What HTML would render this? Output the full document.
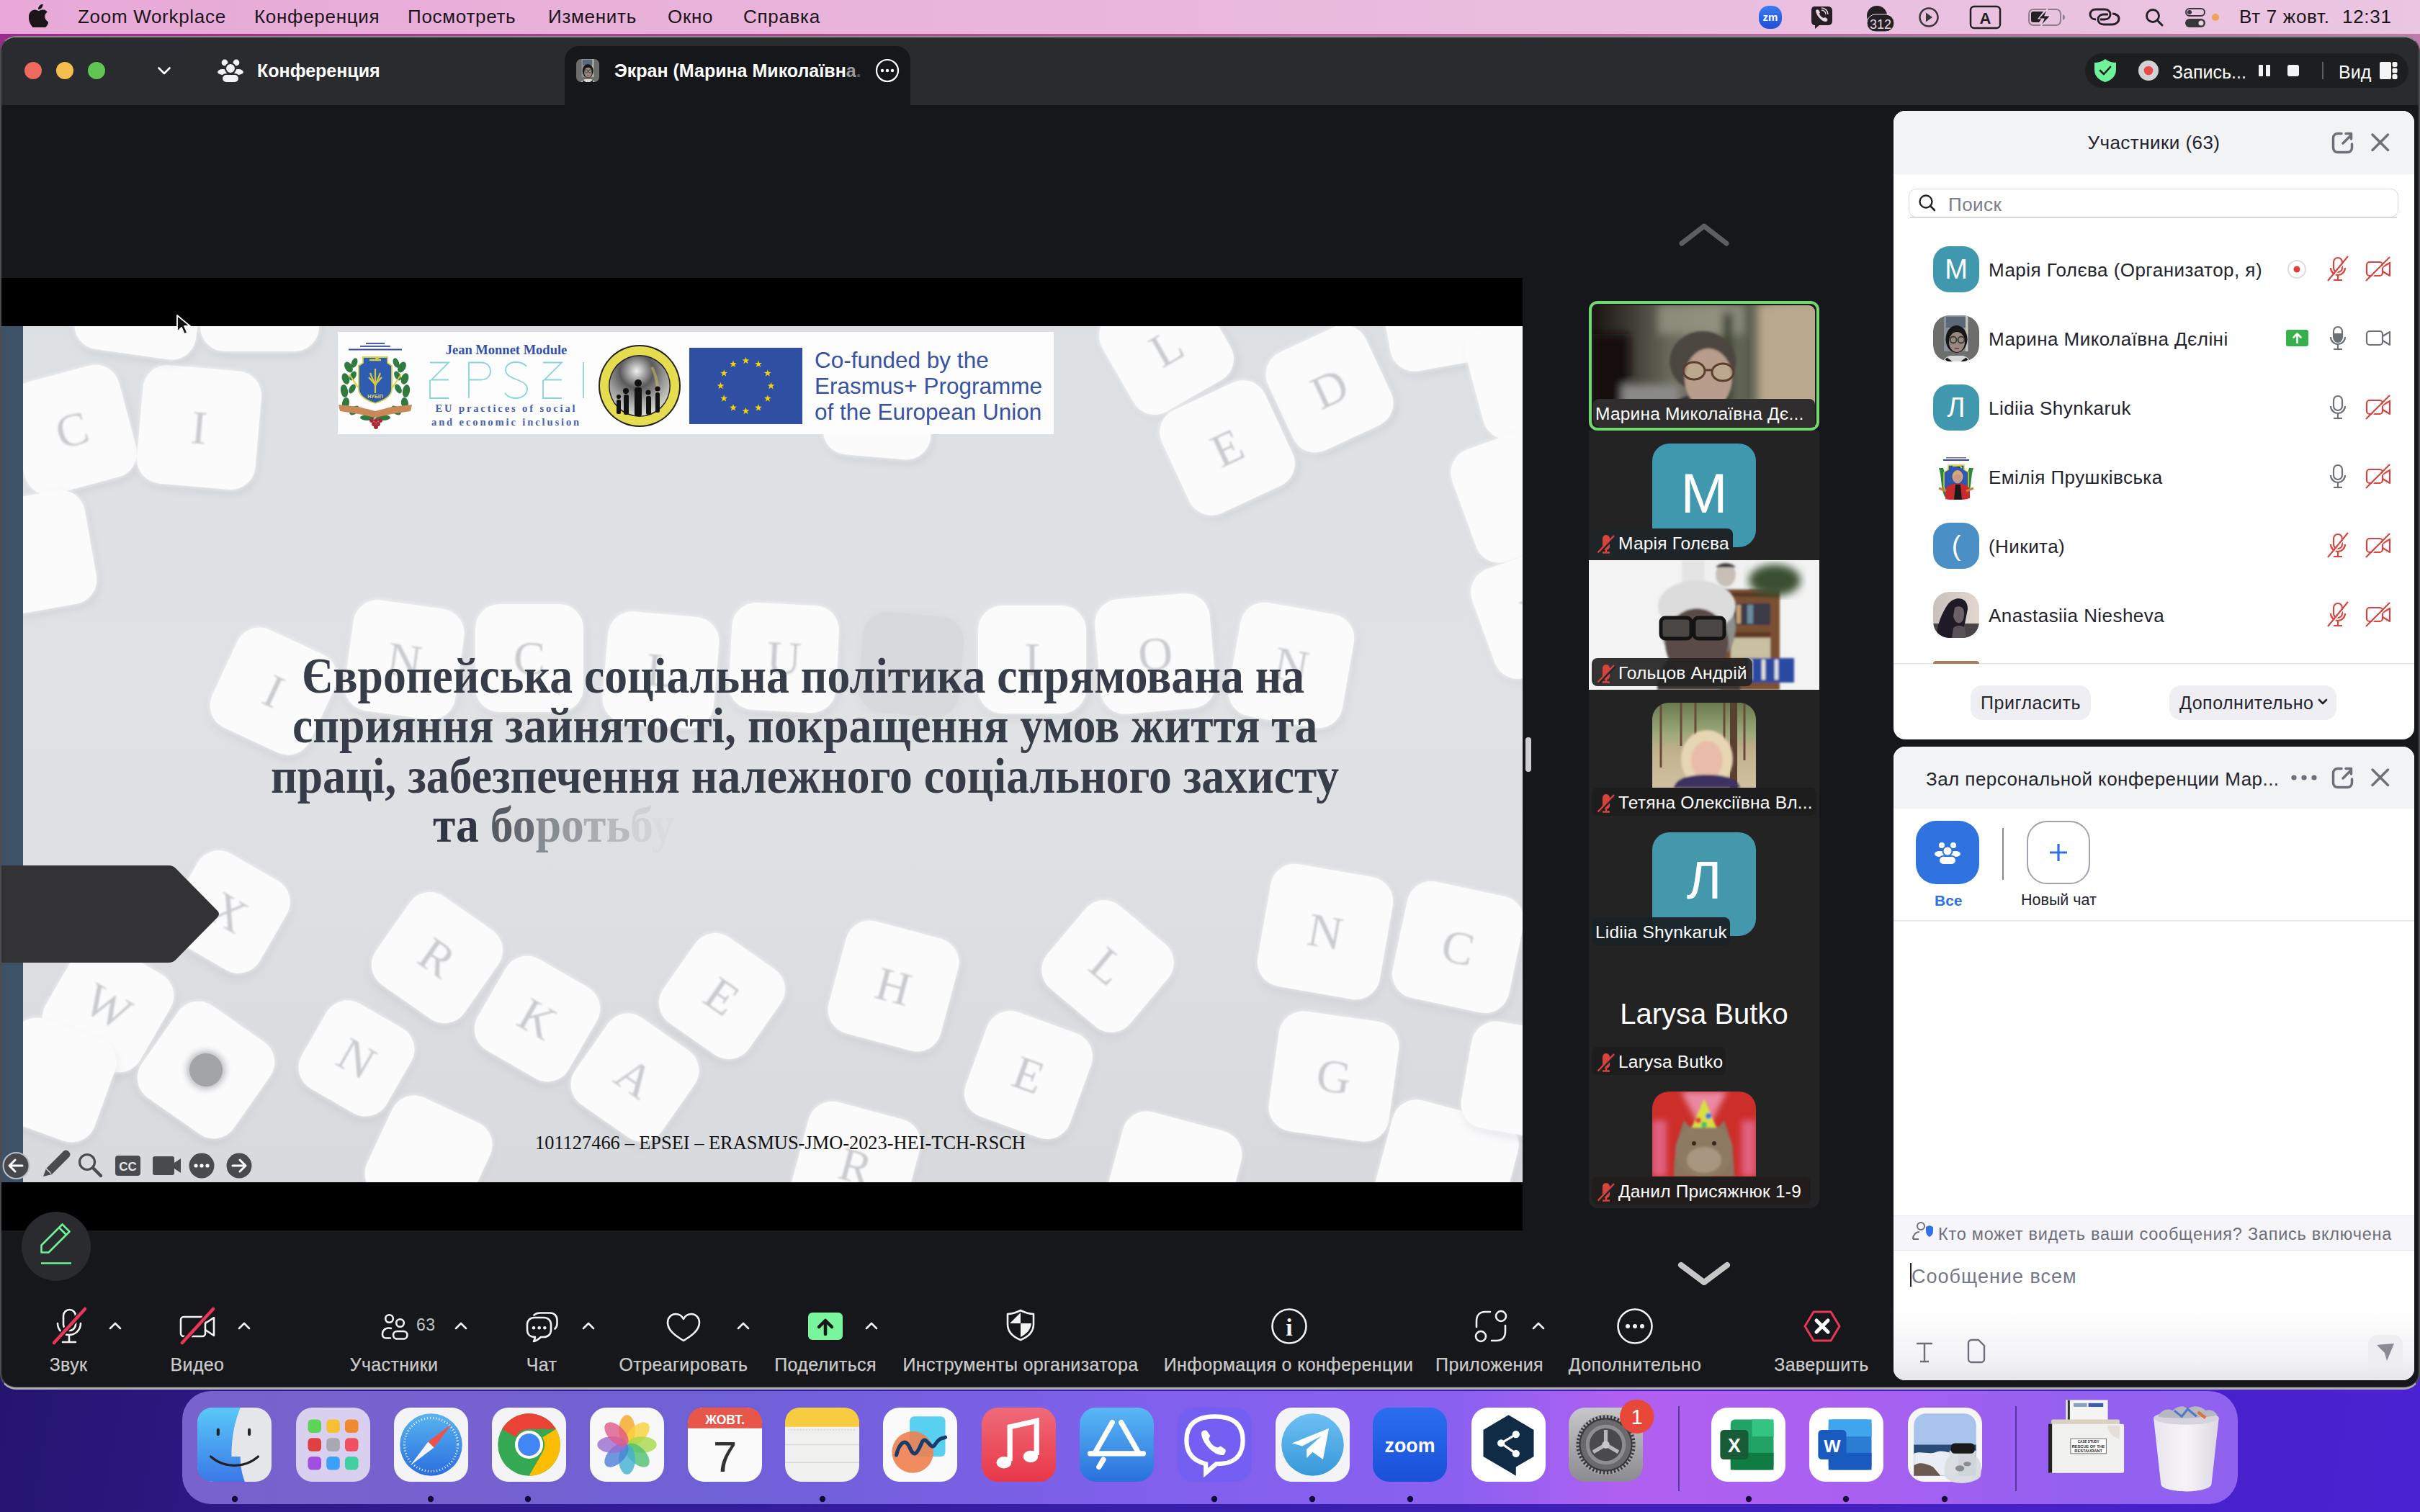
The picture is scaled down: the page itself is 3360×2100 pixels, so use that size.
<!DOCTYPE html>
<html><head><meta charset="utf-8">
<style>
*{margin:0;padding:0;box-sizing:border-box}
html,body{width:3360px;height:2100px;overflow:hidden}
body{position:relative;font-family:"Liberation Sans",sans-serif;background:linear-gradient(100deg,#1d1158 0%,#2e1a8a 20%,#3a1fb0 60%,#4b22d2 100%)}
.a{position:absolute}
.t{position:absolute;white-space:nowrap;line-height:1}
#menubar{left:0;top:0;width:3360px;height:47px;background:linear-gradient(90deg,#e8a9d8 0%,#e9b8dc 50%,#eac6e2 100%);color:#1b1519;font-size:26px;letter-spacing:0.7px}
#menubar .t{top:10px}
#strip{left:0;top:47px;width:3360px;height:40px;background:linear-gradient(90deg,#9a2a8c,#b0508f 40%,#c07aa8)}
#win{left:0;top:50px;width:3360px;height:1880px;background:#16171a;border-radius:22px;border:2px solid #4c4d50;border-top-color:#8c8c8e;border-bottom:3px solid #aeaeb0;box-shadow:inset 0 -1px 0 #3e3f42}
#tb{left:2px;top:52px;width:3356px;height:94px;background:#2a2b2e;border-radius:20px 20px 0 0}
.tl{width:24px;height:24px;border-radius:50%;top:86px}
.wb{color:#fff;font-weight:bold;font-size:25px}
.panel{background:#fff;border-radius:16px;overflow:hidden}
.lbl{color:#cacaca;font-size:25px;letter-spacing:0.35px;-webkit-text-stroke:0.25px #cacaca;top:1883px;text-align:center;width:400px;margin-left:-200px}
.caret{width:14px;height:14px;border-left:3px solid #fff;border-top:3px solid #fff;transform:rotate(45deg);top:1838px}

.die{position:absolute;background:#fbfbfc;border-radius:34px;box-shadow:0 0 5px 2px rgba(251,251,252,0.55),3px 6px 12px rgba(150,155,165,0.22)}
.die.dk{background:#d7d9dc;box-shadow:0 0 10px 3px rgba(215,217,220,0.6)}
.die b{position:absolute;left:0;right:0;top:50%;margin-top:-40px;text-align:center;font-family:"Liberation Serif",serif;font-weight:normal;font-size:66px;line-height:80px;color:#c9cbce;filter:blur(1.3px)}
.ttl{position:absolute;white-space:nowrap;font-family:"Liberation Serif",serif;font-weight:bold;font-size:69px;line-height:1;color:#373d48;transform:scaleX(0.923);transform-origin:0 0}

.lab{position:absolute;height:39px;background:rgba(28,28,28,0.88);border-radius:8px;color:#fff;font-size:24.5px;letter-spacing:0.2px;line-height:39px;white-space:nowrap;overflow:hidden}
.lab span{position:absolute;top:1px}
.av{position:absolute;width:144px;height:144px;border-radius:24px;overflow:hidden}

.pt{position:absolute;white-space:nowrap;line-height:1;color:#23232d;font-size:26px;letter-spacing:0.45px;margin-top:-2px}
.pav{position:absolute;left:2684px;width:64px;height:64px;border-radius:22px;overflow:hidden;color:#fff;font-size:38px;text-align:center;line-height:64px}
.btn{position:absolute;height:48px;background:#eeeef3;border-radius:16px;color:#23232d;font-size:25px;letter-spacing:0.5px;line-height:48px;text-align:center;white-space:nowrap}
</style></head><body>
<div id="menubar" class="a">
  <svg class="a" style="left:40px;top:6px" width="27" height="32" viewBox="0 0 170 200"><path fill="#1b1519" d="M140 106c0-26 21-38 22-39-12-17-30-20-37-20-16-2-31 9-39 9s-20-9-34-9C34 48 17 58 8 75c-19 33-5 82 13 109 9 13 20 28 34 27 14-1 19-9 36-9s21 9 35 9c15 0 24-13 33-26 10-15 14-30 15-31-1 0-33-13-34-48zM113 29c7-9 12-21 11-33-10 0-23 7-31 16-7 8-13 20-11 32 12 1 23-6 31-15z"/></svg>
  <span class="t" style="left:108px">Zoom Workplace</span>
  <span class="t" style="left:353px">Конференция</span>
  <span class="t" style="left:566px">Посмотреть</span>
  <span class="t" style="left:761px">Изменить</span>
  <span class="t" style="left:927px">Окно</span>
  <span class="t" style="left:1032px">Справка</span>
  <span class="t" style="left:3109px">Вт 7 жовт.</span>
  <span class="t" style="left:3252px">12:31</span>
</div>
<div id="strip" class="a"></div>
<div id="win" class="a"></div>
<div id="tb" class="a"></div>
<!-- traffic lights -->
<div class="a tl" style="left:34px;background:#ee6a5f"></div>
<div class="a tl" style="left:78px;background:#f5bf4f"></div>
<div class="a tl" style="left:122px;background:#61c554"></div>
<!-- tab -->
<div class="a" style="left:784px;top:64px;width:480px;height:82px;background:#16171a;border-radius:20px 20px 0 0"></div>
<span class="t wb" style="left:357px;top:86px">Конференция</span>
<span class="t wb" style="left:853px;top:86px">Экран (Марина Миколаївн<span style="color:#9a9a9c">а</span><span style="color:#555">.</span></span>
<!-- right pill -->
<div class="a" style="left:2895px;top:74px;width:449px;height:48px;background:#1d1e20;border-radius:24px"></div>
<span class="t" style="left:3016px;top:88px;color:#fff;font-size:25px">Запись...</span>
<span class="t" style="left:3247px;top:88px;color:#fff;font-size:25px">Вид</span>


<!-- menubar status icons -->
<svg class="a" style="left:2440px;top:6px" width="650" height="40" viewBox="2440 6 650 40">
  <defs><linearGradient id="zmg" x1="0" y1="0" x2="0" y2="1"><stop offset="0" stop-color="#3a7cf2"/><stop offset="1" stop-color="#1d4fd6"/></linearGradient></defs>
  <rect x="2442" y="8" width="32" height="32" rx="14" fill="url(#zmg)"/>
  <text x="2458" y="29" font-family="Liberation Sans" font-weight="bold" font-size="15" fill="#fff" text-anchor="middle">zm</text>
  <path d="M2519 9h19c4 0 6 2 6 6v14c0 4-2 6-6 6h-12l-6 5v-5c-3 0-5-2-5-6V15c0-4 2-6 4-6z" fill="#231f22"/>
  <path d="M2521 15c1-2 3-2 4-1l2 3-1 2c1 3 3 5 6 6l2-1 3 2c1 1 0 3-1 4-6 1-14-8-15-15z" fill="#ead3e6"/>
  <path d="M2529 14a6 6 0 0 1 6 6M2529 11a9 9 0 0 1 9 9" stroke="#ead3e6" stroke-width="1.5" fill="none"/>
  <circle cx="2606" cy="22" r="14" fill="#231f22"/>
  <rect x="2592" y="20" width="38" height="24" rx="12" fill="#231f22" stroke="#ead3e6" stroke-width="1"/>
  <text x="2611" y="40" font-family="Liberation Sans" font-size="18" fill="#ead3e6" text-anchor="middle">312</text>
  <circle cx="2678" cy="24" r="12.5" stroke="#3a3538" stroke-width="2.5" fill="none"/>
  <path d="M2674 17.5l9 6.5-9 6.5z" fill="#3a3538"/>
  <rect x="2736" y="9" width="41" height="30" rx="5" stroke="#231f22" stroke-width="2.5" fill="none"/>
  <text x="2756.5" y="33" font-family="Liberation Sans" font-weight="bold" font-size="22" fill="#231f22" text-anchor="middle">A</text>
  <rect x="2817" y="13" width="44" height="22" rx="6" stroke="#8e7e8c" stroke-width="2" fill="none"/>
  <path d="M2864 20v8c2-1 3-2 3-4s-1-3-3-4z" fill="#8e7e8c"/>
  <path d="M2823 16h14l-6 8h5l-5 7h-8c-2 0-3-1-3-3v-9c0-2 1-3 3-3z" fill="#231f22"/>
  <path d="M2843 12l-13 14h8l-5 11 14-15h-8z" fill="#231f22" stroke="#ead3e6" stroke-width="1.2" stroke-linejoin="round"/>
  <path d="M2910 27c-5 0-8-3-8-7s3-7 8-7h12c5 0 8 3 8 7s-3 7-8 7h-6" stroke="#231f22" stroke-width="3" fill="none"/>
  <path d="M2933 19c5 0 9 3 9 7s-4 8-9 8h-12c-5 0-8-3-8-7s3-7 8-7h6" stroke="#231f22" stroke-width="3" fill="none"/>
  <circle cx="2989" cy="22" r="8.5" stroke="#231f22" stroke-width="2.8" fill="none"/>
  <path d="M2995 28l7 7" stroke="#231f22" stroke-width="3" stroke-linecap="round"/>
  <rect x="3035" y="12" width="26" height="10" rx="5" stroke="#3a3538" stroke-width="2" fill="none"/>
  <circle cx="3040" cy="17" r="3" fill="#3a3538"/>
  <rect x="3034" y="26" width="28" height="12" rx="6" fill="#3a3538"/>
  <circle cx="3056" cy="32" r="3.5" fill="#ead3e6"/>
  <circle cx="3076" cy="24" r="5" fill="#f0a356"/>
</svg>
<!-- toolbar icons -->
<svg class="a" style="left:0;top:50px" width="1300" height="96" viewBox="0 50 1300 96">
  <path d="M220.5 94.5l7.5 7.5 7.5-7.5" stroke="#fff" stroke-width="2.6" fill="none" stroke-linecap="round" stroke-linejoin="round"/>
  <g fill="#f3f3f5" stroke="#2a2b2e" stroke-width="2.2">
    <circle cx="312" cy="87" r="5.5"/><circle cx="328" cy="87" r="5.5"/>
    <ellipse cx="309" cy="100" rx="8" ry="5"/><ellipse cx="331" cy="100" rx="8" ry="5"/>
    <circle cx="320" cy="95" r="7"/>
    <rect x="308" y="103" width="24" height="12" rx="6"/>
  </g>
  <g transform="translate(800 82) scale(0.5)"><defs><clipPath id="cpw2"><rect width="64" height="64" rx="14"/></clipPath></defs><g clip-path="url(#cpw2)"><rect width="64" height="64" fill="#6d6d6b"/><rect x="15" y="0" width="34" height="50" fill="#8a9098"/><rect x="18" y="2" width="28" height="15" fill="#5a6878"/><rect x="45" y="0" width="3" height="50" fill="#c8c8b8"/><ellipse cx="32.5" cy="33" rx="15" ry="19" fill="#161616"/><ellipse cx="33" cy="37" rx="11" ry="14" fill="#9a8880"/><path d="M20 30c2-9 7-13 13-13s11 4 13 11c-4-4-8-5-13-5s-10 1-13 7z" fill="#161616"/><circle cx="28" cy="34" r="4.5" fill="none" stroke="#333a38" stroke-width="1.8"/><circle cx="39" cy="34" r="4.5" fill="none" stroke="#333a38" stroke-width="1.8"/><path d="M30 46h6" stroke="#7a4a50" stroke-width="2"/><path d="M14 64c2-6 8-8 12-8h13c5 0 10 2 12 8z" fill="#d8d8d6"/><path d="M18 60l8 6M47 60l-8 6" stroke="#161616" stroke-width="4"/></g></g>
  <circle cx="1232" cy="98" r="15" stroke="#fff" stroke-width="2.2" fill="none"/>
  <circle cx="1225" cy="98" r="2.2" fill="#fff"/><circle cx="1232" cy="98" r="2.2" fill="#fff"/><circle cx="1239" cy="98" r="2.2" fill="#fff"/>
</svg>
<svg class="a" style="left:2895px;top:74px" width="449" height="48" viewBox="2895 74 449 48">
  <path d="M2923 82c5 4 10 5 15 5v10c0 9-7 15-15 17-8-2-15-8-15-17V87c5 0 10-1 15-5z" fill="#6ff29a"/>
  <path d="M2916 98l5 5 9-10" stroke="#1d1e20" stroke-width="2.6" fill="none" stroke-linecap="round" stroke-linejoin="round"/>
  <circle cx="2983" cy="98" r="14" fill="#d2d2d4"/><circle cx="2983" cy="98" r="6.3" fill="#e94b4b"/>
  <rect x="3136" y="90" width="6" height="16" rx="1" fill="#f4f4f4"/><rect x="3146" y="90" width="6" height="16" rx="1" fill="#f4f4f4"/>
  <rect x="3176" y="90" width="16" height="16" rx="3" fill="#f4f4f4"/>
  <rect x="3224" y="86" width="2" height="24" fill="#5d5e61"/>
  <rect x="3304" y="86" width="16" height="24" rx="2" fill="#f4f4f4"/>
  <rect x="3321.5" y="86" width="7" height="7" rx="2" fill="#f4f4f4"/>
  <rect x="3321.5" y="94.5" width="7" height="7" rx="2" fill="#f4f4f4"/>
  <rect x="3321.5" y="103" width="7" height="7" rx="2" fill="#f4f4f4"/>
</svg>

<!-- main black -->
<div class="a" style="left:2px;top:386px;width:2112px;height:1323px;background:#000"></div>
<div id="slide" class="a" style="left:2px;top:453px;width:2112px;height:1189px;background:linear-gradient(180deg,#dde0e3 0%,#e0e2e5 45%,#dcdee1 70%,#d8dadd 100%);overflow:hidden">
<div class="die" style="left:18px;top:64px;width:160px;height:160px;transform:rotate(-15deg)"><b>C</b></div>
<div class="die" style="left:192px;top:58px;width:165px;height:165px;transform:rotate(5deg)"><b>I</b></div>
<div class="die" style="left:-35px;top:235px;width:160px;height:160px;transform:rotate(-10deg)"></div>
<div class="die" style="left:108px;top:-130px;width:170px;height:170px;transform:rotate(8deg)"></div>
<div class="die" style="left:276px;top:-130px;width:165px;height:165px;transform:rotate(0deg)"></div>
<div class="die" style="left:1540px;top:-48px;width:155px;height:155px;transform:rotate(-30deg)"><b>L</b></div>
<div class="die" style="left:1769px;top:12px;width:150px;height:150px;transform:rotate(-25deg)"><b>D</b></div>
<div class="die" style="left:1623px;top:90px;width:158px;height:158px;transform:rotate(-25deg)"><b>E</b></div>
<div class="die" style="left:1921px;top:-83px;width:140px;height:140px;transform:rotate(-10deg)"></div>
<div class="die" style="left:2043px;top:-13px;width:160px;height:160px;transform:rotate(-15deg)"></div>
<div class="die" style="left:1144px;top:32px;width:150px;height:150px;transform:rotate(5deg)"></div>
<div class="die" style="left:2026px;top:150px;width:165px;height:165px;transform:rotate(-20deg)"></div>
<div class="die" style="left:2053px;top:317px;width:160px;height:160px;transform:rotate(-20deg)"><b>X</b></div>
<div class="die" style="left:303px;top:432px;width:150px;height:150px;transform:rotate(25deg)"><b>I</b></div>
<div class="die" style="left:482px;top:386px;width:155px;height:155px;transform:rotate(8deg)"><b>N</b></div>
<div class="die" style="left:658px;top:386px;width:150px;height:150px;transform:rotate(0deg)"><b>C</b></div>
<div class="die" style="left:838px;top:400px;width:155px;height:155px;transform:rotate(5deg)"><b>L</b></div>
<div class="die" style="left:1012px;top:386px;width:149px;height:149px;transform:rotate(3deg)"><b>U</b></div>
<div class="die dk" style="left:1193px;top:400px;width:140px;height:140px;transform:rotate(5deg)"></div>
<div class="die" style="left:1356px;top:388px;width:150px;height:150px;transform:rotate(0deg)"><b>I</b></div>
<div class="die" style="left:1522px;top:375px;width:160px;height:160px;transform:rotate(-5deg)"><b>O</b></div>
<div class="die" style="left:1711px;top:391px;width:160px;height:160px;transform:rotate(10deg)"><b>N</b></div>
<div class="die" style="left:244px;top:742px;width:143px;height:143px;transform:rotate(30deg)"><b>X</b></div>
<div class="die" style="left:72px;top:869px;width:152px;height:152px;transform:rotate(30deg)"><b>W</b></div>
<div class="die" style="left:-2px;top:972px;width:150px;height:150px;transform:rotate(20deg)"></div>
<div class="die" style="left:206px;top:955px;width:156px;height:156px;transform:rotate(35deg)"><i style="position:absolute;left:50%;top:50%;width:46px;height:46px;margin:-23px 0 0 -23px;border-radius:50%;background:#a3a4a7;box-shadow:0 0 9px 4px #bebfc2"></i></div>
<div class="die" style="left:530px;top:802px;width:150px;height:150px;transform:rotate(35deg)"><b>R</b></div>
<div class="die" style="left:671px;top:889px;width:146px;height:146px;transform:rotate(30deg)"><b>K</b></div>
<div class="die" style="left:425px;top:949px;width:136px;height:136px;transform:rotate(30deg)"><b>N</b></div>
<div class="die" style="left:806px;top:970px;width:147px;height:147px;transform:rotate(35deg)"><b>A</b></div>
<div class="die" style="left:928px;top:858px;width:145px;height:145px;transform:rotate(35deg)"><b>E</b></div>
<div class="die" style="left:1158px;top:836px;width:161px;height:161px;transform:rotate(15deg)"><b>H</b></div>
<div class="die" style="left:1461px;top:814px;width:150px;height:150px;transform:rotate(40deg)"><b>L</b></div>
<div class="die" style="left:1752px;top:755px;width:172px;height:172px;transform:rotate(10deg)"><b>N</b></div>
<div class="die" style="left:1940px;top:780px;width:165px;height:165px;transform:rotate(12deg)"><b>C</b></div>
<div class="die" style="left:1349px;top:963px;width:154px;height:154px;transform:rotate(20deg)"><b>E</b></div>
<div class="die" style="left:1766px;top:958px;width:168px;height:168px;transform:rotate(8deg)"><b>G</b></div>
<div class="die" style="left:518px;top:1082px;width:150px;height:150px;transform:rotate(25deg)"></div>
<div class="die" style="left:1106px;top:1087px;width:160px;height:160px;transform:rotate(15deg)"><b>R</b></div>
<div class="die" style="left:1541px;top:1102px;width:170px;height:170px;transform:rotate(15deg)"></div>
<div class="die" style="left:1914px;top:1087px;width:180px;height:180px;transform:rotate(15deg)"></div>
<div class="die" style="left:2033px;top:972px;width:150px;height:150px;transform:rotate(10deg)"></div>
<div class="a" style="left:0;top:0;width:30px;height:1189px;background:#3d5266"></div>
<span class="ttl" style="left:417px;top:452px">Європейська соціальна політика спрямована на</span>
<span class="ttl" style="left:404px;top:521px">сприяння зайнятості, покращення умов життя та</span>
<span class="ttl" style="left:374px;top:591px">праці, забезпечення належного соціального захисту</span>
<span class="ttl" style="left:599px;top:659px;color:#2f3542">та <span style="color:#565c64">б</span><span style="color:#666b73">о</span><span style="color:#878b92">р</span><span style="color:#979ba1">о</span><span style="color:#a9adb2">т</span><span style="color:#b7bbbf">ь</span><span style="color:#ced1d5">б</span><span style="color:#d9dbdf">у</span></span>
<span class="t" style="left:741px;top:1121px;font-family:'Liberation Serif',serif;font-size:26.4px;color:#111">101127466 – EPSEI – ERASMUS-JMO-2023-HEI-TCH-RSCH</span>
<svg class="a" style="left:0;top:749px" width="310" height="136" viewBox="0 0 310 136"><path d="M0 0H232q6 0 10 4L300 63q4 4 0 9L242 131q-4 4-10 4H0z" fill="#333335"/></svg>
</div>


<svg class="a" style="left:469px;top:461px" width="994" height="143" viewBox="469 461 994 143">
  <rect x="469" y="461" width="994" height="142" fill="#fdfdfd"/>
  <!-- emblem -->
  <g fill="#3a4a9a"><rect x="508" y="476" width="26" height="1.8"/><rect x="500" y="480" width="42" height="1.8"/><rect x="484" y="484.5" width="74" height="2"/></g>
  <g fill="#2f7a3e">
   <ellipse cx="484" cy="510" rx="5" ry="8" transform="rotate(-30 484 510)"/><ellipse cx="492" cy="504" rx="4" ry="7" transform="rotate(20 492 504)"/>
   <ellipse cx="480" cy="526" rx="5" ry="8" transform="rotate(-20 480 526)"/><ellipse cx="490" cy="522" rx="4" ry="7" transform="rotate(30 490 522)"/>
   <ellipse cx="478" cy="543" rx="5" ry="9" transform="rotate(-10 478 543)"/><ellipse cx="489" cy="540" rx="4" ry="7" transform="rotate(30 489 540)"/>
   <ellipse cx="480" cy="560" rx="5" ry="8" transform="rotate(10 480 560)"/><ellipse cx="492" cy="570" rx="5" ry="8" transform="rotate(50 492 570)"/>
   <ellipse cx="558" cy="510" rx="5" ry="8" transform="rotate(30 558 510)"/><ellipse cx="550" cy="504" rx="4" ry="7" transform="rotate(-20 550 504)"/>
   <ellipse cx="562" cy="526" rx="5" ry="8" transform="rotate(20 562 526)"/><ellipse cx="552" cy="522" rx="4" ry="7" transform="rotate(-30 552 522)"/>
   <ellipse cx="564" cy="543" rx="5" ry="9" transform="rotate(10 564 543)"/><ellipse cx="553" cy="540" rx="4" ry="7" transform="rotate(-30 553 540)"/>
   <ellipse cx="562" cy="560" rx="5" ry="8" transform="rotate(-10 562 560)"/><ellipse cx="550" cy="570" rx="5" ry="8" transform="rotate(-50 550 570)"/>
   <ellipse cx="510" cy="580" rx="10" ry="4"/><ellipse cx="532" cy="580" rx="10" ry="4"/>
  </g>
  <path d="M485 520l12 18M557 520l-12 18" stroke="#e0d040" stroke-width="2"/>
  <path d="M504 496h34v8l6 4v32c0 10-10 16-23 20-13-4-23-10-23-20v-32l6-4z" fill="#2e5cb0" stroke="#cfd040" stroke-width="1.8"/>
  <path d="M513 500h16M521 499l6-3" stroke="#d8d040" stroke-width="2.4"/>
  <path d="M514 518l7 18 7-18M521 512v34M512 524l9 10 9-10" stroke="#d8c840" stroke-width="2.2" fill="none"/>
  <text x="521" y="553" font-family="Liberation Sans" font-weight="bold" font-size="7" fill="#e8d850" text-anchor="middle">НУБіП</text>
  <path d="M470 562l28 3 23 6 23-6 28-3-2 9-26 4-23 5-23-5-26-4z" fill="#c98858"/>
  <g fill="#a82838"><circle cx="516" cy="584" r="3"/><circle cx="522" cy="584" r="3"/><circle cx="528" cy="584" r="3"/><circle cx="519" cy="589" r="3"/><circle cx="525" cy="589" r="3"/><circle cx="522" cy="593" r="3"/></g>
  <!-- Jean Monnet -->
  <text x="703" y="492" font-family="Liberation Serif" font-weight="bold" font-size="18.5" fill="#3450a6" text-anchor="middle">Jean Monnet Module</text>
  <g stroke="#86d6db" stroke-width="1.8" fill="none">
    <path d="M597 503.5h26L599 527.5h24M597 527.5v25.5h26"/>
    <path d="M651 553V503.5h17c9 0 13 6 13 12s-4 12-13 12h-17"/>
    <path d="M731 509c-3-4-8-6-15-6-9 0-14 5-14 11 0 14 30 12 30 26 0 8-7 13-16 13-7 0-12-3-15-7"/>
    <path d="M754 503.5h26L756 527.5h24M754 527.5v25.5h26"/>
    <path d="M810 503v50"/>
  </g>
  <text x="703" y="572" font-family="Liberation Serif" font-weight="bold" font-size="14.5" letter-spacing="2.9" fill="#4561ad" text-anchor="middle">EU practices of social</text>
  <text x="703" y="591" font-family="Liberation Serif" font-weight="bold" font-size="14.5" letter-spacing="2.9" fill="#4561ad" text-anchor="middle">and economic inclusion</text>
  <!-- round logo -->
  <defs><radialGradient id="glob" cx="0.45" cy="0.25" r="0.8"><stop offset="0" stop-color="#f0f0f0"/><stop offset="0.35" stop-color="#5a5a5a"/><stop offset="0.6" stop-color="#9a9a9a"/><stop offset="1" stop-color="#e8e8e0"/></radialGradient></defs>
  <circle cx="888" cy="536" r="57" fill="#222"/>
  <circle cx="888" cy="536" r="55" fill="#e6dc50"/>
  <circle cx="888" cy="536" r="43" fill="#222"/>
  <circle cx="888" cy="536" r="41.5" fill="url(#glob)"/>
  <path d="M905 510c6 10 10 30 8 50" stroke="#c8b860" stroke-width="4" fill="none" opacity="0.6"/>
  <g fill="#111"><rect x="866" y="548" width="7" height="28" rx="2.5"/><rect x="881" y="538" width="10" height="40" rx="3"/><rect x="897" y="550" width="7" height="26" rx="2.5"/><rect x="910" y="545" width="6" height="28" rx="2.5"/><rect x="856" y="555" width="6" height="20" rx="2"/><circle cx="869" cy="543" r="4"/><circle cx="886" cy="532" r="5"/><circle cx="900" cy="545" r="3.6"/><circle cx="913" cy="540" r="3.6"/><circle cx="859" cy="551" r="3"/></g>
  <!-- EU flag -->
  <rect x="957" y="483" width="157" height="106" fill="#2f50a2"/>
  <polygon points="1035.5,495.8 1036.7,499.3 1040.4,499.4 1037.5,501.6 1038.6,505.2 1035.5,503.1 1032.4,505.2 1033.5,501.6 1030.6,499.4 1034.3,499.3" fill="#f5d20a"/><polygon points="1053.0,500.5 1054.2,504.0 1057.9,504.1 1055.0,506.3 1056.1,509.9 1053.0,507.8 1049.9,509.9 1051.0,506.3 1048.1,504.1 1051.8,504.0" fill="#f5d20a"/><polygon points="1065.8,513.3 1067.0,516.8 1070.8,516.9 1067.8,519.1 1068.9,522.7 1065.8,520.6 1062.8,522.7 1063.8,519.1 1060.9,516.9 1064.6,516.8" fill="#f5d20a"/><polygon points="1070.5,530.8 1071.7,534.3 1075.4,534.4 1072.5,536.6 1073.6,540.2 1070.5,538.1 1067.4,540.2 1068.5,536.6 1065.6,534.4 1069.3,534.3" fill="#f5d20a"/><polygon points="1065.8,548.3 1067.0,551.8 1070.8,551.9 1067.8,554.1 1068.9,557.7 1065.8,555.6 1062.8,557.7 1063.8,554.1 1060.9,551.9 1064.6,551.8" fill="#f5d20a"/><polygon points="1053.0,561.1 1054.2,564.6 1057.9,564.7 1055.0,567.0 1056.1,570.5 1053.0,568.4 1049.9,570.5 1051.0,567.0 1048.1,564.7 1051.8,564.6" fill="#f5d20a"/><polygon points="1035.5,565.8 1036.7,569.3 1040.4,569.4 1037.5,571.6 1038.6,575.2 1035.5,573.1 1032.4,575.2 1033.5,571.6 1030.6,569.4 1034.3,569.3" fill="#f5d20a"/><polygon points="1018.0,561.1 1019.2,564.6 1022.9,564.7 1020.0,567.0 1021.1,570.5 1018.0,568.4 1014.9,570.5 1016.0,567.0 1013.1,564.7 1016.8,564.6" fill="#f5d20a"/><polygon points="1005.2,548.3 1006.4,551.8 1010.1,551.9 1007.2,554.1 1008.2,557.7 1005.2,555.6 1002.1,557.7 1003.2,554.1 1000.2,551.9 1004.0,551.8" fill="#f5d20a"/><polygon points="1000.5,530.8 1001.7,534.3 1005.4,534.4 1002.5,536.6 1003.6,540.2 1000.5,538.1 997.4,540.2 998.5,536.6 995.6,534.4 999.3,534.3" fill="#f5d20a"/><polygon points="1005.2,513.3 1006.4,516.8 1010.1,516.9 1007.2,519.1 1008.2,522.7 1005.2,520.6 1002.1,522.7 1003.2,519.1 1000.2,516.9 1004.0,516.8" fill="#f5d20a"/><polygon points="1018.0,500.5 1019.2,504.0 1022.9,504.1 1020.0,506.3 1021.1,509.9 1018.0,507.8 1014.9,509.9 1016.0,506.3 1013.1,504.1 1016.8,504.0" fill="#f5d20a"/>
  <text font-family="Liberation Sans" font-size="31.5" fill="#3852a2"><tspan x="1131" y="511">Co-funded by the</tspan><tspan x="1131" y="547">Erasmus+ Programme</tspan><tspan x="1131" y="583">of the European Union</tspan></text>
</svg>



<!-- slide toolbar -->
<svg class="a" style="left:0;top:1590px" width="360" height="55" viewBox="0 1590 360 55">
  <circle cx="22.5" cy="1619" r="18" fill="#47484b" stroke="#b8c0c8" stroke-width="2"/>
  <path d="M31 1619H14M21 1611l-8 8 8 8" stroke="#fff" stroke-width="3" fill="none" stroke-linecap="round" stroke-linejoin="round"/>
  <path d="M60 1634l4-11 24-24c2-2 5-2 7 0l1 1c2 2 2 5 0 7l-24 24z" fill="#4a4b4e"/>
  <path d="M64 1623l7 7" stroke="#dcdee1" stroke-width="1.5"/>
  <circle cx="121" cy="1614" r="10.5" fill="none" stroke="#4a4b4e" stroke-width="3.2"/>
  <path d="M129 1622l11 11" stroke="#4a4b4e" stroke-width="4.5" stroke-linecap="round"/>
  <rect x="160" y="1605" width="35" height="28" rx="4" fill="#4a4b4e"/>
  <text x="177.5" y="1626" font-family="Liberation Sans" font-weight="bold" font-size="17" fill="#e8e8e8" text-anchor="middle">CC</text>
  <rect x="212" y="1606" width="30" height="26" rx="3" fill="#4a4b4e"/>
  <path d="M242 1615l9-6v20l-9-6z" fill="#4a4b4e"/>
  <circle cx="280" cy="1619" r="17.5" fill="#4a4b4e"/>
  <circle cx="272" cy="1619" r="2.6" fill="#fff"/><circle cx="280" cy="1619" r="2.6" fill="#fff"/><circle cx="288" cy="1619" r="2.6" fill="#fff"/>
  <circle cx="332" cy="1619" r="17.5" fill="#4a4b4e"/>
  <path d="M323 1619H341M333 1611l8 8-8 8" stroke="#fff" stroke-width="3" fill="none" stroke-linecap="round" stroke-linejoin="round"/>
</svg>
<!-- cursor -->
<svg class="a" style="left:243px;top:436px" width="22" height="32" viewBox="0 0 22 32"><path d="M3 2v23l6-6 4 9 4-2-4-9h8z" fill="#111" stroke="#fff" stroke-width="1.8" stroke-linejoin="round"/></svg>
<!-- gallery handle -->
<div class="a" style="left:2118px;top:1024px;width:8px;height:48px;border-radius:4px;background:#cfcfcf"></div>

<!-- gallery column -->
<div class="a" style="left:2206px;top:598px;width:320px;height:1080px;background:#232323;border-radius:0 0 12px 12px"></div>
<!-- tile1 -->
<div class="a" style="left:2206px;top:418px;width:320px;height:180px;border:4px solid #72d76e;border-radius:12px;background:#1a1a1a"></div>
<svg class="a" style="left:2212px;top:424px" width="308" height="168" viewBox="0 0 308 168">
 <defs><clipPath id="t1c"><rect width="308" height="168" rx="9"/></clipPath><filter id="b6"><feGaussianBlur stdDeviation="6"/></filter><filter id="b2"><feGaussianBlur stdDeviation="1.6"/></filter>
 <linearGradient id="t1g" x1="0" y1="0" x2="1" y2="0"><stop offset="0" stop-color="#1a1510"/><stop offset="0.15" stop-color="#3a3630"/><stop offset="0.35" stop-color="#6a6a5c"/><stop offset="0.55" stop-color="#7a7a6a"/><stop offset="0.7" stop-color="#5a5e50"/><stop offset="0.82" stop-color="#a89a80"/><stop offset="1" stop-color="#b8a88e"/></linearGradient></defs>
 <g clip-path="url(#t1c)">
  <rect width="308" height="168" fill="url(#t1g)"/>
  <g filter="url(#b6)">
   <rect x="90" y="0" width="120" height="40" fill="#9a9a88" opacity="0.7"/>
   <rect x="180" y="10" width="14" height="158" fill="#3a4232"/>
   <rect x="0" y="40" width="50" height="128" fill="#15100c"/>
   <rect x="40" y="110" width="80" height="58" fill="#8a8a88"/>
   <rect x="230" y="0" width="78" height="168" fill="#b8a88c"/>
  </g>
  <g filter="url(#b2)">
   <path d="M100 168c2-30 20-45 50-45s48 15 50 45z" fill="#3a3a40"/>
   <ellipse cx="152" cy="78" rx="46" ry="42" fill="#4c4640"/>
   <ellipse cx="160" cy="102" rx="33" ry="42" fill="#b89c8c"/>
   <path d="M118 72c6-22 22-32 40-30 18 2 32 12 36 34-8-12-22-18-38-18-16 0-30 6-38 14z" fill="#4c4640"/>
  </g>
  <ellipse cx="140" cy="91" rx="15" ry="12" fill="rgba(200,200,150,0.25)" stroke="#5a3e30" stroke-width="3"/>
  <ellipse cx="180" cy="93" rx="15" ry="12" fill="rgba(200,200,150,0.25)" stroke="#5a3e30" stroke-width="3"/>
  <path d="M155 90h10" stroke="#5a3e30" stroke-width="3"/>
 </g>
</svg>
<div class="lab" style="left:2212px;top:554px;width:308px;background:#2f2d2d;border-radius:8px 8px 0 9px"><span style="left:3px">Марина Миколаївна Дє...</span></div>
<!-- tile2 -->
<div class="av" style="left:2294px;top:616px;background:#3f98ad"><span class="t" style="left:0;width:144px;text-align:center;top:30px;font-size:78px;color:#fff">M</span></div>
<div class="lab" style="left:2210px;top:734px;width:196px;background:#1e2528"><svg class="a" style="left:5px;top:6px" width="30" height="30" viewBox="0 0 30 30"><path d="M10 8a5 5 0 0 1 10 0v11a5 5 0 0 1-10 0z" fill="#d8433c"/><path d="M15 23v4M10 27.5h10" stroke="#d8433c" stroke-width="2.4" fill="none"/><path d="M4.5 28.5L27 5" stroke="#1e2427" stroke-width="4"/><path d="M3.5 27.5L26 4" stroke="#d8433c" stroke-width="2.4"/></svg><span style="left:37px">Марія Голєва</span></div>
<!-- tile3 video -->
<svg class="a" style="left:2206px;top:778px" width="320" height="180" viewBox="0 0 320 180">
 <rect width="320" height="180" fill="#f3f3f3"/>
 <g filter="url(#b2)">
  <rect x="129" y="0" width="32" height="45" fill="#e4e4e4"/>
  <rect x="162" y="0" width="60" height="42" fill="#f0f0f0"/>
  <ellipse cx="190" cy="20" rx="14" ry="17" fill="#c8c0b8"/>
  <path d="M176 10c4-8 24-8 28 0z" fill="#3a3838"/>
  <rect x="183" y="40" width="82" height="140" fill="#7a5030"/>
  <rect x="197" y="45" width="68" height="6" fill="#5a3a20"/>
  <rect x="197" y="60" width="55" height="30" fill="#3a3a48"/>
  <rect x="205" y="62" width="6" height="26" fill="#c8a070"/><rect x="220" y="62" width="8" height="26" fill="#6a8aa0"/>
  <rect x="190" y="100" width="62" height="6" fill="#5a3a20"/>
  <rect x="197" y="108" width="55" height="28" fill="#c8c0a0"/>
  <rect x="215" y="136" width="70" height="34" fill="#2a4aa0"/>
  <rect x="222" y="138" width="5" height="28" fill="#e0e0e0"/><rect x="240" y="138" width="5" height="28" fill="#e0e0e0"/><rect x="258" y="138" width="5" height="28" fill="#e0e0e0"/>
 </g>
 <g filter="url(#b6)"><ellipse cx="258" cy="28" rx="36" ry="22" fill="#3a5030"/></g>
 <g filter="url(#b2)">
  <path d="M95 180c0-30 20-60 55-60s60 30 60 60z" fill="#3a3432"/>
  <ellipse cx="152" cy="92" rx="52" ry="58" fill="#8e8e8c"/>
  <ellipse cx="150" cy="64" rx="54" ry="36" fill="#dcdcdc"/>
  <ellipse cx="150" cy="115" rx="44" ry="48" fill="#5a4c48"/>
 </g>
 <rect x="100" y="80" width="42" height="29" rx="6" fill="#4a4644" stroke="#141414" stroke-width="5"/><rect x="146" y="80" width="42" height="29" rx="6" fill="#4a4644" stroke="#141414" stroke-width="5"/><path d="M140 86h8" stroke="#141414" stroke-width="4"/>
</svg>
<div class="lab" style="left:2210px;top:914px;width:223px;background:rgba(35,35,35,0.92)"><svg class="a" style="left:5px;top:6px" width="30" height="30" viewBox="0 0 30 30"><path d="M10 8a5 5 0 0 1 10 0v11a5 5 0 0 1-10 0z" fill="#d8433c"/><path d="M15 23v4M10 27.5h10" stroke="#d8433c" stroke-width="2.4" fill="none"/><path d="M4.5 28.5L27 5" stroke="#1e2427" stroke-width="4"/><path d="M3.5 27.5L26 4" stroke="#d8433c" stroke-width="2.4"/></svg><span style="left:37px">Гольцов Андрій</span></div>
<!-- tile4 -->
<svg class="a" style="left:2294px;top:976px" width="144" height="118" viewBox="0 0 144 118">
 <defs><clipPath id="t4c"><path d="M0 24C0 10 10 0 24 0h96c14 0 24 10 24 24v94H0z"/></clipPath><linearGradient id="t4g" x1="0" y1="0" x2="0" y2="1"><stop offset="0" stop-color="#6a7a50"/><stop offset="0.35" stop-color="#9aa878"/><stop offset="0.55" stop-color="#c0b08a"/><stop offset="1" stop-color="#d0c0a0"/></linearGradient></defs>
 <g clip-path="url(#t4c)">
  <rect width="144" height="118" fill="url(#t4g)"/>
  <g stroke="#6a4a38" stroke-width="3"><path d="M12 0v90M40 0v60M60 0v50M100 0v60M128 0v80"/></g>
  <rect x="108" y="0" width="10" height="118" fill="#5a4030"/>
  <g filter="url(#b2)">
   <ellipse cx="76" cy="78" rx="36" ry="40" fill="#e6d6b4"/>
   <ellipse cx="76" cy="80" rx="22" ry="27" fill="#e8bca8"/>
   <path d="M30 118c4-14 24-18 46-18s42 4 46 18z" fill="#3a3060"/>
  </g>
 </g>
</svg>
<div class="lab" style="left:2210px;top:1094px;width:312px"><svg class="a" style="left:5px;top:6px" width="30" height="30" viewBox="0 0 30 30"><path d="M10 8a5 5 0 0 1 10 0v11a5 5 0 0 1-10 0z" fill="#d8433c"/><path d="M15 23v4M10 27.5h10" stroke="#d8433c" stroke-width="2.4" fill="none"/><path d="M4.5 28.5L27 5" stroke="#1e2427" stroke-width="4"/><path d="M3.5 27.5L26 4" stroke="#d8433c" stroke-width="2.4"/></svg><span style="left:37px">Тетяна Олексіївна Вл...</span></div>
<!-- tile5 -->
<div class="av" style="left:2294px;top:1156px;background:#4398ab"><span class="t" style="left:0;width:144px;text-align:center;top:30px;font-size:74px;color:#fff">Л</span></div>
<div class="lab" style="left:2210px;top:1274px;width:192px;background:rgba(26,34,38,0.95)"><span style="left:5px">Lidiia Shynkaruk</span></div>
<!-- tile6 -->
<span class="t" style="left:2206px;width:320px;text-align:center;top:1388px;font-size:40px;color:#fff">Larysa Butko</span>
<div class="lab" style="left:2210px;top:1454px;width:186px;background:rgba(30,30,30,0.95)"><svg class="a" style="left:5px;top:6px" width="30" height="30" viewBox="0 0 30 30"><path d="M10 8a5 5 0 0 1 10 0v11a5 5 0 0 1-10 0z" fill="#d8433c"/><path d="M15 23v4M10 27.5h10" stroke="#d8433c" stroke-width="2.4" fill="none"/><path d="M4.5 28.5L27 5" stroke="#1e2427" stroke-width="4"/><path d="M3.5 27.5L26 4" stroke="#d8433c" stroke-width="2.4"/></svg><span style="left:37px">Larysa Butko</span></div>
<!-- tile7 -->
<svg class="a" style="left:2294px;top:1516px" width="144" height="118" viewBox="0 0 144 118">
 <defs><clipPath id="t7c"><path d="M0 24C0 10 10 0 24 0h96c14 0 24 10 24 24v94H0z"/></clipPath><filter id="b4"><feGaussianBlur stdDeviation="4"/></filter></defs>
 <g clip-path="url(#t7c)">
  <rect width="144" height="118" fill="#cc2e2a"/>
  <g filter="url(#b4)"><path d="M72 0L40 0 72 60 104 0z" fill="#f0a0c0" opacity="0.8"/><rect x="0" y="40" width="20" height="78" fill="#e06080"/><rect x="124" y="40" width="20" height="78" fill="#e06080"/></g>
  <g filter="url(#b2)">
   <path d="M30 118c0-40 8-60 14-78l12 14h32l12-14c6 18 14 38 14 78z" fill="#8a7660"/>
   <ellipse cx="72" cy="82" rx="40" ry="38" fill="#8e7a64"/>
   <ellipse cx="72" cy="95" rx="24" ry="18" fill="#a89680"/>
   <path d="M55 50l17-40 17 40z" fill="#d8e040"/><circle cx="64" cy="40" r="4" fill="#e04040"/><circle cx="78" cy="34" r="4" fill="#4070e0"/><circle cx="72" cy="46" r="4" fill="#40c060"/>
  </g>
  <circle cx="58" cy="72" r="3" fill="#3a2a20"/><circle cx="86" cy="72" r="3" fill="#3a2a20"/>
 </g>
</svg>
<div class="lab" style="left:2210px;top:1634px;width:304px;background:rgba(35,30,30,0.95)"><svg class="a" style="left:5px;top:6px" width="30" height="30" viewBox="0 0 30 30"><path d="M10 8a5 5 0 0 1 10 0v11a5 5 0 0 1-10 0z" fill="#d8433c"/><path d="M15 23v4M10 27.5h10" stroke="#d8433c" stroke-width="2.4" fill="none"/><path d="M4.5 28.5L27 5" stroke="#1e2427" stroke-width="4"/><path d="M3.5 27.5L26 4" stroke="#d8433c" stroke-width="2.4"/></svg><span style="left:37px">Данил Присяжнюк 1-9</span></div>
<!-- chevrons -->
<svg class="a" style="left:2326px;top:308px" width="80" height="40" viewBox="2326 308 80 40"><path d="M2335 338l31-24 31 24" stroke="#5d5e62" stroke-width="7" fill="none" stroke-linecap="round" stroke-linejoin="round"/></svg>
<svg class="a" style="left:2326px;top:1745px" width="80" height="45" viewBox="2326 1745 80 45"><path d="M2334 1757l32 24 32-24" stroke="#c6c6c6" stroke-width="8" fill="none" stroke-linecap="round" stroke-linejoin="round"/></svg>


<!-- participants panel -->

<div class="a panel" style="left:2629px;top:154px;width:723px;height:873px">
  <div class="a" style="left:0;top:0;width:723px;height:88px;background:#f2f3f5"></div>
</div>
<span class="pt" style="left:2629px;width:723px;text-align:center;top:187px">Участники (63)</span>
<svg class="a" style="left:2629px;top:154px" width="723" height="873" viewBox="2629 154 723 873">
  <path d="M3251 185.5h-5c-4 0-6.5 2.5-6.5 6.5v13c0 4 2.5 6.5 6.5 6.5h13c4 0 6.5-2.5 6.5-6.5v-5M3253 199l11-11M3257 185.5h7.5v7.5" stroke="#6e7079" stroke-width="3.5" fill="none" stroke-linecap="round" stroke-linejoin="round"/>
  <path d="M3294 187l21.5 21.5M3315.5 187l-21.5 21.5" stroke="#6e7079" stroke-width="3.4" stroke-linecap="round"/>
  <rect x="2650.5" y="262.5" width="679" height="39" rx="10" fill="#fff" stroke="#d6d6dc" stroke-width="1"/>
  <rect x="2652" y="301" width="676" height="1.5" fill="#c8c8d0"/>
  <circle cx="2674" cy="280" r="8.5" fill="none" stroke="#222" stroke-width="2.4"/><path d="M2680 286l6 6" stroke="#222" stroke-width="2.6" stroke-linecap="round"/>
  <g transform="translate(3189 374)"><circle r="12" fill="none" stroke="#dcdce4" stroke-width="2"/><circle r="4.5" fill="#e0403a"/></g><g transform="translate(3246 374)"><rect x="-6" y="-16" width="12" height="20" rx="6" fill="none" stroke="#d8433c" stroke-width="2.2"/><path d="M-10 -2a10 10 0 0 0 20 0M0 9v6M-6 15h12" stroke="#d8433c" stroke-width="2.2" fill="none"/><path d="M-14 16L14 -18" stroke="#d8433c" stroke-width="2.2"/><path d="M-12.3 17.3L15.7 -16.7" stroke="#fff" stroke-width="1.5"/></g><g transform="translate(3302 374)"><rect x="-16" y="-10" width="22" height="19" rx="4" fill="none" stroke="#d8433c" stroke-width="2.2"/><path d="M6 -3l10-6v18l-10-6" fill="none" stroke="#d8433c" stroke-width="2.2" stroke-linejoin="round"/><path d="M-17 16L16 -17" stroke="#d8433c" stroke-width="2.2"/><path d="M-15.5 17.5L17.5 -15.5" stroke="#fff" stroke-width="1.5"/></g><rect x="3174" y="458" width="31" height="23" rx="3" fill="#36b04a"/><path d="M3189.5 476v-12M3184.5 468.5l5-5 5 5" stroke="#fff" stroke-width="2.6" fill="none" stroke-linecap="round" stroke-linejoin="round"/><g transform="translate(3246 470)"><rect x="-6" y="-16" width="12" height="20" rx="6" fill="none" stroke="#6e7079" stroke-width="2.2"/><path d="M-10 -2a10 10 0 0 0 20 0M0 9v6M-6 15h12" stroke="#6e7079" stroke-width="2.2" fill="none"/></g><g transform="translate(3302 470)"><rect x="-16" y="-10" width="22" height="19" rx="4" fill="none" stroke="#6e7079" stroke-width="2.2"/><path d="M6 -3l10-6v18l-10-6" fill="none" stroke="#6e7079" stroke-width="2.2" stroke-linejoin="round"/></g><g transform="translate(3246 566)"><rect x="-6" y="-16" width="12" height="20" rx="6" fill="none" stroke="#6e7079" stroke-width="2.2"/><path d="M-10 -2a10 10 0 0 0 20 0M0 9v6M-6 15h12" stroke="#6e7079" stroke-width="2.2" fill="none"/></g><g transform="translate(3302 566)"><rect x="-16" y="-10" width="22" height="19" rx="4" fill="none" stroke="#d8433c" stroke-width="2.2"/><path d="M6 -3l10-6v18l-10-6" fill="none" stroke="#d8433c" stroke-width="2.2" stroke-linejoin="round"/><path d="M-17 16L16 -17" stroke="#d8433c" stroke-width="2.2"/><path d="M-15.5 17.5L17.5 -15.5" stroke="#fff" stroke-width="1.5"/></g><g transform="translate(3246 662)"><rect x="-6" y="-16" width="12" height="20" rx="6" fill="none" stroke="#6e7079" stroke-width="2.2"/><path d="M-10 -2a10 10 0 0 0 20 0M0 9v6M-6 15h12" stroke="#6e7079" stroke-width="2.2" fill="none"/></g><g transform="translate(3302 662)"><rect x="-16" y="-10" width="22" height="19" rx="4" fill="none" stroke="#d8433c" stroke-width="2.2"/><path d="M6 -3l10-6v18l-10-6" fill="none" stroke="#d8433c" stroke-width="2.2" stroke-linejoin="round"/><path d="M-17 16L16 -17" stroke="#d8433c" stroke-width="2.2"/><path d="M-15.5 17.5L17.5 -15.5" stroke="#fff" stroke-width="1.5"/></g><g transform="translate(3246 758)"><rect x="-6" y="-16" width="12" height="20" rx="6" fill="none" stroke="#d8433c" stroke-width="2.2"/><path d="M-10 -2a10 10 0 0 0 20 0M0 9v6M-6 15h12" stroke="#d8433c" stroke-width="2.2" fill="none"/><path d="M-14 16L14 -18" stroke="#d8433c" stroke-width="2.2"/><path d="M-12.3 17.3L15.7 -16.7" stroke="#fff" stroke-width="1.5"/></g><g transform="translate(3302 758)"><rect x="-16" y="-10" width="22" height="19" rx="4" fill="none" stroke="#d8433c" stroke-width="2.2"/><path d="M6 -3l10-6v18l-10-6" fill="none" stroke="#d8433c" stroke-width="2.2" stroke-linejoin="round"/><path d="M-17 16L16 -17" stroke="#d8433c" stroke-width="2.2"/><path d="M-15.5 17.5L17.5 -15.5" stroke="#fff" stroke-width="1.5"/></g><g transform="translate(3246 854)"><rect x="-6" y="-16" width="12" height="20" rx="6" fill="none" stroke="#d8433c" stroke-width="2.2"/><path d="M-10 -2a10 10 0 0 0 20 0M0 9v6M-6 15h12" stroke="#d8433c" stroke-width="2.2" fill="none"/><path d="M-14 16L14 -18" stroke="#d8433c" stroke-width="2.2"/><path d="M-12.3 17.3L15.7 -16.7" stroke="#fff" stroke-width="1.5"/></g><g transform="translate(3302 854)"><rect x="-16" y="-10" width="22" height="19" rx="4" fill="none" stroke="#d8433c" stroke-width="2.2"/><path d="M6 -3l10-6v18l-10-6" fill="none" stroke="#d8433c" stroke-width="2.2" stroke-linejoin="round"/><path d="M-17 16L16 -17" stroke="#d8433c" stroke-width="2.2"/><path d="M-15.5 17.5L17.5 -15.5" stroke="#fff" stroke-width="1.5"/></g>
  <path d="M3240 463h12v7a6 6 0 0 1-12 0z" fill="#6e7079"/>
  <rect x="2629" y="921" width="723" height="1.5" fill="#e6e6ea"/>
</svg>
<span class="pt" style="left:2705px;top:273px;color:#7b7d8a">Поиск</span>
<div class="pav" style="top:342px;background:#3f98ad">M</div>
<div class="pav" style="top:438px;background:none"><svg width="64" height="64" viewBox="0 0 64 64"><defs><clipPath id="cpw"><rect width="64" height="64" rx="22"/></clipPath></defs><g clip-path="url(#cpw)"><rect width="64" height="64" fill="#6d6d6b"/><rect x="15" y="0" width="34" height="50" fill="#8a9098"/><rect x="18" y="2" width="28" height="15" fill="#5a6878"/><rect x="45" y="0" width="3" height="50" fill="#c8c8b8"/><ellipse cx="32.5" cy="33" rx="15" ry="19" fill="#161616"/><ellipse cx="33" cy="37" rx="11" ry="14" fill="#9a8880"/><path d="M20 30c2-9 7-13 13-13s11 4 13 11c-4-4-8-5-13-5s-10 1-13 7z" fill="#161616"/><circle cx="28" cy="34" r="4.5" fill="none" stroke="#333a38" stroke-width="1.8"/><circle cx="39" cy="34" r="4.5" fill="none" stroke="#333a38" stroke-width="1.8"/><path d="M30 46h6" stroke="#7a4a50" stroke-width="2"/><path d="M14 64c2-6 8-8 12-8h13c5 0 10 2 12 8z" fill="#d8d8d6"/><path d="M18 60l8 6M47 60l-8 6" stroke="#161616" stroke-width="4"/></g></svg></div>
<div class="pav" style="top:534px;background:#3f98ad">Л</div>
<div class="pav" style="top:630px;background:none"><svg width="64" height="64" viewBox="0 0 64 64"><defs><clipPath id="cpe"><rect width="64" height="64" rx="22"/></clipPath></defs><g clip-path="url(#cpe)"><rect width="64" height="64" fill="#fdfdfd"/><rect x="14" y="8" width="36" height="2" fill="#3a4a8a"/><rect x="18" y="5" width="28" height="1.5" fill="#6a70a0"/><path d="M8 20c4 10 2 26 8 40l6-2c-4-12-4-28-8-38z" fill="#2a8a3a"/><path d="M56 20c-4 10-2 26-8 40l-6-2c4-12 4-28 8-38z" fill="#2a8a3a"/><path d="M21 16h22v6l6 4v20c0 6-8 10-17 12-9-2-17-6-17-12V26l6-4z" fill="#2e58b0" stroke="#d8d040" stroke-width="1.5"/><path d="M27 17h10l3 3" stroke="#d8d040" stroke-width="2"/><ellipse cx="34" cy="32" rx="7.5" ry="9" fill="#d8a878"/><ellipse cx="34" cy="35" rx="5.5" ry="6.5" fill="#c89888"/><path d="M17 64V52c0-6 6-9 11-10h12c6 1 11 4 11 10v12z" fill="#c82a30"/><path d="M31 43h7l2 21h-11z" fill="#1a1a1a"/><path d="M8 48l10 4M56 48l-10 4" stroke="#c88040" stroke-width="3"/></g></svg></div>
<div class="pav" style="top:726px;background:#4a8fc6">(</div>
<div class="pav" style="top:822px;background:none"><svg width="64" height="64" viewBox="0 0 64 64"><defs><clipPath id="cpa"><rect width="64" height="64" rx="22"/></clipPath><linearGradient id="anb" x1="0" y1="0" x2="1" y2="0"><stop offset="0" stop-color="#c8c0bc"/><stop offset="1" stop-color="#e2d8d0"/></linearGradient></defs><g clip-path="url(#cpa)"><rect width="64" height="64" fill="url(#anb)"/><rect x="0" y="44" width="64" height="20" fill="#4a4448"/><path d="M4 64C6 44 12 30 20 18c6-8 14-10 20-8 6 2 8 8 8 14l-4 20-6 20z" fill="#1e1a26"/><path d="M30 22c4-3 10-2 12 2 2 5 1 12-1 16-2 3-5 4-7 3-3-1-5-5-6-9z" fill="#6a6066"/><path d="M28 50c4-4 12-4 16 0l2 14H26z" fill="#5a5258"/></g></svg></div>
<div class="a" style="left:2684px;top:918px;width:64px;height:4px;border-radius:20px 20px 0 0;background:#a08060"></div>
<span class="pt" style="left:2761px;top:364px">Марія Голєва (Организатор, я)</span>
<span class="pt" style="left:2761px;top:460px">Марина Миколаївна Дєліні</span>
<span class="pt" style="left:2761px;top:556px">Lidiia Shynkaruk</span>
<span class="pt" style="left:2761px;top:652px">Емілія Прушківська</span>
<span class="pt" style="left:2761px;top:748px">(Никита)</span>
<span class="pt" style="left:2761px;top:844px">Anastasiia Niesheva</span>
<div class="btn" style="left:2736px;top:952px;width:167px">Пригласить</div>
<div class="btn" style="left:3012px;top:952px;width:232px;text-align:left;padding-left:14px">Дополнительно</div>
<svg class="a" style="left:3216px;top:968px" width="18" height="14" viewBox="0 0 18 14"><path d="M4 4l5 5 5-5" stroke="#23232d" stroke-width="2.6" fill="none" stroke-linecap="round" stroke-linejoin="round"/></svg>

<!-- chat panel -->
<div class="a panel" style="left:2629px;top:1037px;width:723px;height:880px">
  <div class="a" style="left:0;top:0;width:723px;height:86px;background:#f2f3f5"></div>
  <div class="a" style="left:0;top:651px;width:723px;height:49px;background:#f5f5fa;border-top:1px solid #ececf2;border-bottom:1px solid #e6e6ee"></div>
  <div class="a" style="left:0;top:700px;width:723px;height:180px;background:linear-gradient(180deg,#fff 0%,#fff 45%,#f2f2f5 85%,#e6e6ea 100%)"></div>
</div>
<span class="pt" style="left:2674px;top:1071px">Зал персональной конференции Мар...</span>
<svg class="a" style="left:2629px;top:1037px" width="723" height="880" viewBox="2629 1037 723 880">
  <circle cx="3185" cy="1080" r="3.6" fill="#6e7079"/><circle cx="3199" cy="1080" r="3.6" fill="#6e7079"/><circle cx="3213" cy="1080" r="3.6" fill="#6e7079"/>
  <path d="M3251 1067.5h-5c-4 0-6.5 2.5-6.5 6.5v13c0 4 2.5 6.5 6.5 6.5h13c4 0 6.5-2.5 6.5-6.5v-5M3253 1081l11-11M3257 1067.5h7.5v7.5" stroke="#6e7079" stroke-width="3.5" fill="none" stroke-linecap="round" stroke-linejoin="round"/>
  <path d="M3294 1069l21.5 21.5M3315.5 1069l-21.5 21.5" stroke="#6e7079" stroke-width="3.4" stroke-linecap="round"/>
  <rect x="2660" y="1140" width="88" height="88" rx="28" fill="#2f72e0"/>
  <g fill="#fff" stroke="#2f72e0" stroke-width="2"><circle cx="2696" cy="1174" r="5"/><circle cx="2712" cy="1174" r="5"/><ellipse cx="2693" cy="1186" rx="8" ry="5"/><ellipse cx="2715" cy="1186" rx="8" ry="5"/><circle cx="2704" cy="1182" r="6.5"/><rect x="2692" y="1189" width="24" height="12" rx="6"/></g>
  <rect x="2780" y="1150" width="2" height="72" fill="#8a8c94"/>
  <rect x="2815" y="1141" width="86" height="86" rx="27" fill="none" stroke="#a0a4ac" stroke-width="2"/>
  <path d="M2858 1172v24M2846 1184h24" stroke="#2f72e0" stroke-width="3.2"/>
  <rect x="2629" y="1278" width="723" height="1.5" fill="#e4e4ea"/>
  <g transform="translate(2669 1712)" fill="none" stroke="#6e6e7a" stroke-width="2"><circle cx="-2" cy="-9" r="5"/><path d="M-13 9c0-6 4-10 9-10"/><path d="M-13 9h8"/></g>
  <path d="M2674 1704l5-2 5 2v6c0 4-2 6-5 8-3-2-5-4-5-8z" fill="#2f72e0"/>
  <rect x="2652" y="1754" width="2" height="33" fill="#222"/>
  <path d="M2661 1866h22M2672 1866v25M2666 1891h12" stroke="#6e6e7a" stroke-width="2.4" fill="none"/>
  <path d="M2733 1865c0-2 2-4 4-4h10l8 8v19c0 2-2 4-4 4h-14c-2 0-4-2-4-4z" fill="none" stroke="#6e6e7a" stroke-width="2.4" stroke-linejoin="round"/>
  <rect x="3288" y="1854" width="48" height="48" rx="13" fill="#ededf2"/>
  <path d="M3300 1868l24-2-10 24-3-11z" fill="#8a8a94"/>
</svg>
<span class="t" style="left:2686px;top:1240px;font-size:21px;letter-spacing:0px;font-weight:bold;color:#2f72e0">Все</span>
<span class="t" style="left:2806px;top:1240px;font-size:21.5px;letter-spacing:0px;color:#23232d">Новый чат</span>
<span class="t" style="left:2691px;top:1703px;font-size:23.5px;letter-spacing:0.75px;color:#6e6e7a">Кто может видеть ваши сообщения? Запись включена</span>
<span class="t" style="left:2654px;top:1760px;font-size:27px;letter-spacing:1px;color:#74768a">Сообщение всем</span>



<!-- bottom toolbar -->
<svg class="a" style="left:0;top:1800px" width="2620" height="80" viewBox="0 1800 2620 80">
  <g fill="none" stroke="#f2f2f2" stroke-width="2.6" stroke-linecap="round" stroke-linejoin="round">
    <rect x="88" y="1819" width="17" height="29" rx="8.5"/>
    <path d="M80 1838a16 16 0 0 0 32 0M96 1854v10M87 1864h18"/>
    <path d="M153 1845l7-7 7 7M332 1845l7-7 7 7M633 1845l7-7 7 7M810 1845l7-7 7 7M1025 1845l7-7 7 7M1203 1845l7-7 7 7M2129 1845l7-7 7 7"/>
    <rect x="251" y="1829" width="34" height="27" rx="4"/>
    <path d="M285 1838l12-8v25l-12-8"/>
    <circle cx="540.5" cy="1831.5" r="5.3"/><path d="M543 1845c-1-0.5-2-0.5-3-0.5-6 0-9 4-9 8v1c0 3 2 5 5 5h6"/><circle cx="555.5" cy="1837.5" r="5.3"/><rect x="546" y="1849" width="19.5" height="10.5" rx="5.25"/>
    <path d="M741.5 1826.5c2-2 5-3 9-3h13c6 0 10 4 10 10v5c0 3-1 5-3 7"/><path d="M732 1840c0-6 4-10 10-10h13c6 0 10 4 10 10v7c0 6-4 10-10 10h-4c-3 3-6 5-10 6 1-2 2-4 2-6c-7 0-11-4-11-10z"/>
    <path d="M949 1862c-10-6-22-14-22-25 0-7 5-12 11-12 5 0 9 3 11 7 2-4 6-7 11-7 6 0 11 5 11 12 0 11-12 19-22 25z"/>
    <path d="M1417 1820c6 3 12 5 18 5v14c0 11-8 18-18 22-10-4-18-11-18-22v-14c6 0 12-2 18-5z"/>
    <circle cx="1790" cy="1842" r="23.5"/>
    <rect x="2048" y="1822" width="0" height="0"/>
    <path d="M2050 1843v-8c0-8 4-13 12-13h7M2090 1841v8c0 8-4 13-12 13h-7"/>
    <circle cx="2084" cy="1828" r="7"/><circle cx="2056" cy="1856" r="7"/>
    <circle cx="2270" cy="1842" r="23.5"/>
  </g>
  <path d="M75 1865L118 1818" stroke="#16171a" stroke-width="8" stroke-linecap="round"/><path d="M75 1865L118 1818" stroke="#e8365a" stroke-width="4.5" stroke-linecap="round"/>
  <path d="M253 1865L296 1818" stroke="#16171a" stroke-width="8" stroke-linecap="round"/><path d="M253 1865L296 1818" stroke="#e8365a" stroke-width="4.5" stroke-linecap="round"/>
  <path d="M1417 1823v15h-15zM1417 1838h15c-1 9-7 15-15 19z" fill="#f2f2f2"/>
  <circle cx="741" cy="1844.3" r="2.3" fill="#f2f2f2"/><circle cx="748.7" cy="1844.3" r="2.3" fill="#f2f2f2"/><circle cx="756.3" cy="1844.3" r="2.3" fill="#f2f2f2"/>
  <text x="1790" y="1855" font-family="Liberation Serif" font-weight="bold" font-size="34" fill="#f2f2f2" text-anchor="middle">i</text>
  <circle cx="2260" cy="1842" r="3" fill="#f2f2f2"/><circle cx="2270" cy="1842" r="3" fill="#f2f2f2"/><circle cx="2280" cy="1842" r="3" fill="#f2f2f2"/>
  <rect x="1122" y="1823" width="48" height="38" rx="6" fill="#79f59b"/>
  <path d="M1146 1853v-16M1137 1843l9-9 9 9" stroke="#16171a" stroke-width="4.5" fill="none" stroke-linecap="round" stroke-linejoin="round"/>
  <path d="M2518 1822h24l12 20-12 20h-24l-12-20z" fill="none" stroke="#e8365a" stroke-width="3" stroke-linejoin="round"/>
  <path d="M2522 1834l16 16M2538 1834l-16 16" stroke="#fff" stroke-width="5" stroke-linecap="round"/>
</svg>
<span class="t" style="left:578px;top:1829px;font-size:23px;color:#c4c4c4;letter-spacing:0.5px">63</span>
<span class="t lbl" style="left:95px">Звук</span>
<span class="t lbl" style="left:274px">Видео</span>
<span class="t lbl" style="left:547px">Участники</span>
<span class="t lbl" style="left:752px">Чат</span>
<span class="t lbl" style="left:949px">Отреагировать</span>
<span class="t lbl" style="left:1146px">Поделиться</span>
<span class="t lbl" style="left:1417px">Инструменты организатора</span>
<span class="t lbl" style="left:1789px">Информация о конференции</span>
<span class="t lbl" style="left:2068px">Приложения</span>
<span class="t lbl" style="left:2270px">Дополнительно</span>
<span class="t lbl" style="left:2529px">Завершить</span>
<!-- pencil button -->
<div class="a" style="left:30px;top:1683px;width:96px;height:96px;border-radius:50%;background:#2a2b2e"></div>
<svg class="a" style="left:30px;top:1683px" width="96" height="96" viewBox="30 1683 96 96"><path d="M57.5 1729.5l29-29 10 10-29 29h-10zM82 1705l10 10" stroke="#6ff29a" stroke-width="2.6" fill="none" stroke-linejoin="round"/><path d="M57 1754.5h42" stroke="#6ff29a" stroke-width="2.6"/></svg>

<!-- dock -->
<div class="a" style="left:253px;top:1932px;width:2854px;height:157px;border-radius:40px;background:linear-gradient(90deg,#7862cc 0%,#7561d0 15%,#6e60d6 26%,#8060ec 47%,#8a60f0 62%,#b060f0 70%,#a860f0 82%,#9460f0 92%,#9062f0 100%)"></div>

<svg class="a" style="left:253px;top:1900px" width="2860" height="200" viewBox="253 1900 2860 200">
<defs><linearGradient id="fblue" x1="0" y1="0" x2="0" y2="1"><stop offset="0" stop-color="#5ac8f8"/><stop offset="1" stop-color="#3a78e8"/></linearGradient><linearGradient id="sfb" x1="0" y1="0" x2="0" y2="1"><stop offset="0" stop-color="#58b4f0"/><stop offset="1" stop-color="#2a6ee0"/></linearGradient><linearGradient id="asb" x1="0" y1="0" x2="0" y2="1"><stop offset="0" stop-color="#5ab8f4"/><stop offset="1" stop-color="#2a70de"/></linearGradient><linearGradient id="mus" x1="0" y1="0" x2="0" y2="1"><stop offset="0" stop-color="#f06a78"/><stop offset="1" stop-color="#e83848"/></linearGradient><linearGradient id="zmb" x1="0" y1="0" x2="0" y2="1"><stop offset="0" stop-color="#2a6ef0"/><stop offset="1" stop-color="#1a50d8"/></linearGradient><linearGradient id="tgb" x1="0" y1="0" x2="0" y2="1"><stop offset="0" stop-color="#6cc0f4"/><stop offset="1" stop-color="#3898d8"/></linearGradient><linearGradient id="gear" x1="0" y1="0" x2="0" y2="1"><stop offset="0" stop-color="#c8c8cc"/><stop offset="1" stop-color="#8a8a90"/></linearGradient></defs><g transform="translate(274 1955) scale(1.03)"><rect width="100" height="100" rx="22" fill="#e4e6ea"/><path d="M22 0h36c-8 20-12 40-12 66h12c0 12 2 24 6 34H22C8 100 0 92 0 78V22C0 8 8 0 22 0z" fill="url(#fblue)"/><rect x="26" y="28" width="4" height="10" rx="2" fill="#222"/><rect x="68" y="28" width="4" height="10" rx="2" fill="#222"/><path d="M18 66c18 16 46 16 64 0" stroke="#222" stroke-width="3" fill="none" stroke-linecap="round"/></g><g transform="translate(411 1955) scale(1.03)"><rect width="100" height="100" rx="22" fill="#d8d0ee"/><rect x="16" y="16" width="18" height="18" rx="5" fill="#5ed45a"/><rect x="41" y="16" width="18" height="18" rx="5" fill="#f8c030"/><rect x="66" y="16" width="18" height="18" rx="5" fill="#f08a30"/><rect x="16" y="41" width="18" height="18" rx="5" fill="#e04040"/><rect x="41" y="41" width="18" height="18" rx="5" fill="#a8a8b0"/><rect x="66" y="41" width="18" height="18" rx="5" fill="#f05060"/><rect x="16" y="66" width="18" height="18" rx="5" fill="#a050e0"/><rect x="41" y="66" width="18" height="18" rx="5" fill="#3aa0f8"/><rect x="66" y="66" width="18" height="18" rx="5" fill="#40d0a0"/></g><g transform="translate(547 1955) scale(1.03)"><rect width="100" height="100" rx="22" fill="#f4f4f6"/><circle cx="50" cy="50" r="42" fill="url(#sfb)"/><circle cx="50" cy="50" r="36" fill="none" stroke="#fff" stroke-width="3" stroke-dasharray="1 3"/><path d="M78 22L54 54 46 46z" fill="#f05048"/><path d="M22 78L46 46 54 54z" fill="#f4f4f4"/></g><g transform="translate(683 1955) scale(1.03)"><rect width="100" height="100" rx="22" fill="#f4f4f6"/><circle cx="50" cy="50" r="42" fill="#34a853"/><path d="M50 8a42 42 0 0 1 36.4 21H50a21 21 0 0 0-18.2 10.5L13.6 29A42 42 0 0 1 50 8z" fill="#ea4335"/><path d="M86.4 29A42 42 0 0 1 50 92l18.2-31.5A21 21 0 0 0 68.2 40z" fill="#fbbc04"/><circle cx="50" cy="50" r="19" fill="#fff"/><circle cx="50" cy="50" r="15" fill="#4285f4"/></g><g transform="translate(819 1955) scale(1.03)"><rect width="100" height="100" rx="22" fill="#f8f8f8"/><ellipse cx="50" cy="30" rx="11" ry="20" fill="#f5a623" opacity="0.8" transform="rotate(0 50 50)"/><ellipse cx="50" cy="30" rx="11" ry="20" fill="#f8d23a" opacity="0.8" transform="rotate(45 50 50)"/><ellipse cx="50" cy="30" rx="11" ry="20" fill="#a8d84a" opacity="0.8" transform="rotate(90 50 50)"/><ellipse cx="50" cy="30" rx="11" ry="20" fill="#4cc070" opacity="0.8" transform="rotate(135 50 50)"/><ellipse cx="50" cy="30" rx="11" ry="20" fill="#40b0d0" opacity="0.8" transform="rotate(180 50 50)"/><ellipse cx="50" cy="30" rx="11" ry="20" fill="#4a80d8" opacity="0.8" transform="rotate(225 50 50)"/><ellipse cx="50" cy="30" rx="11" ry="20" fill="#9a6ad0" opacity="0.8" transform="rotate(270 50 50)"/><ellipse cx="50" cy="30" rx="11" ry="20" fill="#e05a8a" opacity="0.8" transform="rotate(315 50 50)"/></g><g transform="translate(955 1955) scale(1.03)"><rect width="100" height="100" rx="22" fill="#fafafa"/><path d="M0 22C0 8 8 0 22 0h56c14 0 22 8 22 22v6H0z" fill="#e8564a"/><text x="50" y="22" font-family="Liberation Sans" font-weight="bold" font-size="17" fill="#fff" text-anchor="middle">ЖОВТ.</text><text x="50" y="86" font-family="Liberation Sans" font-size="58" fill="#333" text-anchor="middle">7</text></g><g transform="translate(1090 1955) scale(1.03)"><rect width="100" height="100" rx="22" fill="#f0f0ee"/><path d="M0 22C0 8 8 0 22 0h56c14 0 22 8 22 22v4H0z" fill="#f8cc40"/><path d="M0 50h100M0 74h100" stroke="#d8d8d4" stroke-width="1.5"/><path d="M4 30h92" stroke="#c8c8c4" stroke-width="1" stroke-dasharray="2 2"/></g><g transform="translate(1226 1955) scale(1.03)"><rect width="100" height="100" rx="22" fill="#fafafa"/><rect x="36" y="12" width="48" height="54" rx="6" fill="#58d0f0"/><circle cx="40" cy="60" r="28" fill="#f08050" opacity="0.9"/><path d="M18 64c4-16 12-24 18-10s10 8 16-6 12 12 18 2 10-8 14-10" stroke="#1a3a6a" stroke-width="5" fill="none" stroke-linecap="round"/></g><g transform="translate(1363 1955) scale(1.03)"><rect width="100" height="100" rx="22" fill="url(#mus)"/><path d="M38 72V26l36-8v46" stroke="#fff" stroke-width="7" fill="none"/><ellipse cx="30" cy="74" rx="10" ry="8" fill="#fff"/><ellipse cx="66" cy="66" rx="10" ry="8" fill="#fff"/></g><g transform="translate(1499 1955) scale(1.03)"><rect width="100" height="100" rx="22" fill="url(#asb)"/><path d="M44 20l-24 42M56 20l24 42M14 62h72M26 80l6-10" stroke="#fff" stroke-width="7" fill="none" stroke-linecap="round"/></g><g transform="translate(1635 1955) scale(1.03)"><rect width="100" height="100" rx="22" fill="#7360f2"/><path d="M50 12c22 0 38 8 38 32s-14 32-36 32l-14 12v-12C22 72 12 62 12 44 12 20 28 12 50 12z" fill="none" stroke="#fff" stroke-width="6"/><path d="M32 34c2-4 6-4 8-2l4 6-2 4c2 6 6 10 12 12l4-2 6 4c2 2 0 6-2 8-12 2-30-16-30-30z" fill="#fff"/></g><g transform="translate(1771 1955) scale(1.03)"><rect width="100" height="100" rx="22" fill="#f4f4f6"/><circle cx="50" cy="50" r="42" fill="url(#tgb)"/><path d="M22 48l50-20-8 42-14-10-8 8v-12l20-18-26 14z" fill="#fff"/></g><g transform="translate(1906 1955) scale(1.03)"><rect width="100" height="100" rx="22" fill="url(#zmb)"/><text x="50" y="60" font-family="Liberation Sans" font-weight="bold" font-size="26" fill="#fff" text-anchor="middle">zoom</text></g><g transform="translate(2043 1955) scale(1.03)"><rect width="100" height="100" rx="22" fill="#fff"/><path d="M50 10l34 20v36L60 80v12l-10-6-34-20V30z" fill="#0f2b46"/><circle cx="40" cy="48" r="5" fill="#fff"/><circle cx="60" cy="36" r="5" fill="#fff"/><circle cx="60" cy="62" r="5" fill="#fff"/><path d="M40 48l20-12M40 48l20 14" stroke="#fff" stroke-width="3"/></g><g transform="translate(2178 1955) scale(1.03)"><rect width="100" height="100" rx="22" fill="url(#gear)"/><circle cx="50" cy="50" r="40" fill="#3a3a3e"/><path d="M86.0 50.0L91.0 50.0M85.7 54.7L90.6 55.4M84.8 59.3L89.6 60.6M83.3 63.8L87.9 65.7M81.2 68.0L85.5 70.5M78.6 71.9L82.5 75.0M75.5 75.5L79.0 79.0M71.9 78.6L75.0 82.5M68.0 81.2L70.5 85.5M63.8 83.3L65.7 87.9M59.3 84.8L60.6 89.6M54.7 85.7L55.4 90.6M50.0 86.0L50.0 91.0M45.3 85.7L44.6 90.6M40.7 84.8L39.4 89.6M36.2 83.3L34.3 87.9M32.0 81.2L29.5 85.5M28.1 78.6L25.0 82.5M24.5 75.5L21.0 79.0M21.4 71.9L17.5 75.0M18.8 68.0L14.5 70.5M16.7 63.8L12.1 65.7M15.2 59.3L10.4 60.6M14.3 54.7L9.4 55.4M14.0 50.0L9.0 50.0M14.3 45.3L9.4 44.6M15.2 40.7L10.4 39.4M16.7 36.2L12.1 34.3M18.8 32.0L14.5 29.5M21.4 28.1L17.5 25.0M24.5 24.5L21.0 21.0M28.1 21.4L25.0 17.5M32.0 18.8L29.5 14.5M36.2 16.7L34.3 12.1M40.7 15.2L39.4 10.4M45.3 14.3L44.6 9.4M50.0 14.0L50.0 9.0M54.7 14.3L55.4 9.4M59.3 15.2L60.6 10.4M63.8 16.7L65.7 12.1M68.0 18.8L70.5 14.5M71.9 21.4L75.0 17.5M75.5 24.5L79.0 21.0M78.6 28.1L82.5 25.0M81.2 32.0L85.5 29.5M83.3 36.2L87.9 34.3M84.8 40.7L89.6 39.4M85.7 45.3L90.6 44.6" stroke="#a8a8ac" stroke-width="2.5"/><circle cx="50" cy="50" r="34" fill="#6a6a6e"/><circle cx="50" cy="50" r="27" fill="#8e8e92"/><circle cx="50" cy="50" r="22" fill="#4a4a4e"/><path d="M50 50V30M50 50l17 10M50 50L33 60" stroke="#b8b8bc" stroke-width="5"/><circle cx="50" cy="50" r="5" fill="#c8c8cc"/><circle cx="92" cy="12" r="23" fill="#e8483a"/><text x="92" y="22" font-family="Liberation Sans" font-size="28" fill="#fff" text-anchor="middle">1</text></g><g transform="translate(2376 1955) scale(1.03)"><rect width="100" height="100" rx="22" fill="#fff"/><rect x="26" y="16" width="58" height="68" rx="6" fill="#21a366"/><rect x="55" y="16" width="29" height="23" fill="#33c481"/><rect x="26" y="61" width="58" height="23" fill="#107c41"/><rect x="12" y="30" width="38" height="40" rx="5" fill="#185c37"/><text x="31" y="60" font-family="Liberation Sans" font-weight="bold" font-size="26" fill="#fff" text-anchor="middle">X</text></g><g transform="translate(2512 1955) scale(1.03)"><rect width="100" height="100" rx="22" fill="#fff"/><rect x="26" y="16" width="58" height="68" rx="6" fill="#2b7cd3"/><rect x="26" y="16" width="58" height="23" fill="#41a5ee"/><rect x="26" y="61" width="58" height="23" fill="#185abd"/><rect x="12" y="30" width="38" height="40" rx="5" fill="#185abd"/><text x="31" y="60" font-family="Liberation Sans" font-weight="bold" font-size="24" fill="#fff" text-anchor="middle">W</text></g><g transform="translate(2649 1955) scale(1.03)"><rect width="100" height="100" rx="22" fill="#f6f6f6"/><rect x="8" y="8" width="84" height="84" rx="16" fill="#a8c4ec"/><path d="M8 50h84v42H8z" fill="#2a4a78"/><path d="M8 62c10-4 20 2 30-2s20 4 30 0v32H8z" fill="#e8eef4"/><path d="M8 78c8-6 18-2 26 2l10 12H8z" fill="#6a5a50"/><path d="M56 58h36v8c6 4 8 14 6 26-2 6-16 10-26 10s-20-4-22-10c-2-12 0-22 6-26z" fill="#d8dce0" opacity="0.95"/><rect x="58" y="48" width="32" height="14" rx="5" fill="#1a1a1a"/><ellipse cx="70" cy="82" rx="6" ry="4" fill="#8a8a90"/><ellipse cx="80" cy="76" rx="5" ry="3" fill="#8a8a90"/></g><g transform="translate(2844 1955) scale(1.03)"><rect x="24" y="-10" width="56" height="34" fill="#f4f4f4" stroke="#ddd" stroke-width="0.5"/><rect x="26" y="-10" width="3" height="30" fill="#333"/><rect x="34" y="-6" width="18" height="5" fill="#8aa0c0"/><rect x="54" y="-6" width="20" height="5" fill="#3a5ab0"/><rect x="4" y="16" width="92" height="10" rx="2" fill="#d8d0c0"/><rect x="0" y="22" width="102" height="66" rx="2" fill="#f0f0ee"/><rect x="0" y="22" width="5" height="66" fill="#222"/><rect x="30" y="42" width="48" height="20" fill="#fff" stroke="#555" stroke-width="0.8"/><text x="54" y="48" font-family="Liberation Sans" font-weight="bold" font-size="4.5" fill="#222" text-anchor="middle">CASE STUDY</text><text x="54" y="54" font-family="Liberation Sans" font-weight="bold" font-size="5.5" fill="#222" text-anchor="middle">RESCUE OF THE</text><text x="54" y="60" font-family="Liberation Sans" font-weight="bold" font-size="5.5" fill="#222" text-anchor="middle">RESTAURANT</text><path d="M80 24h16v18c-6 0-16-8-16-18z" fill="#e4e0d8"/></g><g transform="translate(2988 1955) scale(1.03)"><defs><linearGradient id="trg" x1="0" y1="0" x2="1" y2="0"><stop offset="0" stop-color="#e8e4ee"/><stop offset="0.5" stop-color="#f6f4f8"/><stop offset="1" stop-color="#dcd8e4"/></linearGradient></defs><path d="M2 14h88l-10 90c-2 6-18 9-34 9s-32-3-34-9z" fill="url(#trg)"/><ellipse cx="46" cy="14" rx="44" ry="9" fill="#d6d2de"/><path d="M8 12c4-8 12-12 20-8 6-6 14-8 20-2 8-6 18-4 24 2 6-2 12 0 16 6-10 4-70 6-80 2z" fill="#b8b8c0"/><path d="M30 4l10 8 8-10 12 10" stroke="#4a7ac8" stroke-width="3" fill="none"/><path d="M62 6l10 8" stroke="#e07040" stroke-width="4"/></g>
<circle cx="326" cy="2082" r="4.2" fill="#100a3a"/><circle cx="598" cy="2082" r="4.2" fill="#100a3a"/><circle cx="733" cy="2082" r="4.2" fill="#100a3a"/><circle cx="1142" cy="2082" r="4.2" fill="#100a3a"/><circle cx="1686" cy="2082" r="4.2" fill="#100a3a"/><circle cx="1822" cy="2082" r="4.2" fill="#100a3a"/><circle cx="1958" cy="2082" r="4.2" fill="#100a3a"/><circle cx="2428" cy="2082" r="4.2" fill="#100a3a"/><circle cx="2563" cy="2082" r="4.2" fill="#100a3a"/><circle cx="2700" cy="2082" r="4.2" fill="#100a3a"/>
<rect x="2330" y="1953" width="2" height="118" fill="#4a2a90" opacity="0.8"/>
<rect x="2798" y="1953" width="2" height="118" fill="#4a2a90" opacity="0.8"/>
</svg>
</body></html>
